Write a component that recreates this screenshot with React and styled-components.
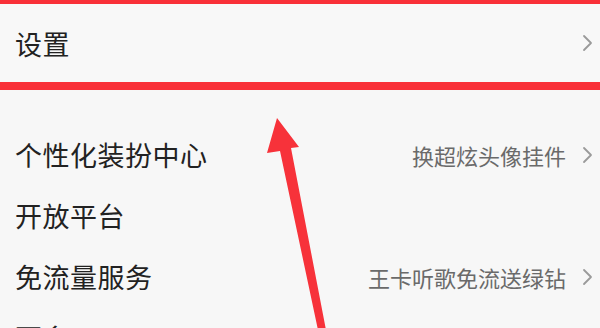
import React from 'react';
import styled, { createGlobalStyle } from 'styled-components';

const GlobalStyle = createGlobalStyle`
  html, body {
    margin: 0;
    padding: 0;
    background: #f7f7f7;
  }
  body {
    font-family: "Noto Sans CJK SC", "Noto Sans", sans-serif;
  }
`;

const Page = styled.div`
  position: relative;
  width: 600px;
  height: 328px;
  overflow: hidden;
  background: #f7f7f7;
`;

const Highlight = styled.div`
  border-top: 4px solid #f93038;
  border-bottom: 8px solid #f93038;
  background: #f8f8f8;
`;

const Row = styled.div`
  display: flex;
  align-items: center;
  justify-content: space-between;
  height: ${({ h }) => h || 61}px;
  padding: 0 6px 0 15px;
  box-sizing: border-box;
`;

const Label = styled.span`
  font-size: 27px;
  line-height: 1;
  color: #222;
  letter-spacing: 0.5px;
`;

const Side = styled.div`
  display: flex;
  align-items: center;
  gap: 16px;
`;

const Hint = styled.span`
  font-size: 22px;
  line-height: 1;
  color: #6a6a6a;
`;

const List = styled.div`
  padding-top: 34px;
`;

const ArrowLayer = styled.svg`
  position: absolute;
  left: 0;
  top: 0;
  pointer-events: none;
`;

const Chevron = () => (
  <svg width="12" height="18" viewBox="0 0 12 18">
    <path d="M2 2 L9 9 L2 16" fill="none" stroke="#9a9a9a" strokeWidth="1.8" strokeLinecap="round" strokeLinejoin="round" />
  </svg>
);

const items = [
  { label: '个性化装扮中心', hint: '换超炫头像挂件' },
  { label: '开放平台' },
  { label: '免流量服务', hint: '王卡听歌免流送绿钻' },
  { label: '更多' },
];

const App = () => (
  <Page>
    <GlobalStyle />
    <Highlight>
      <Row h={78}>
        <Label>设置</Label>
        <Chevron />
      </Row>
    </Highlight>
    <List>
      {items.map(item => (
        <Row key={item.label}>
          <Label>{item.label}</Label>
          {item.hint && (
            <Side>
              <Hint>{item.hint}</Hint>
              <Chevron />
            </Side>
          )}
        </Row>
      ))}
    </List>
    <ArrowLayer width="600" height="328" viewBox="0 0 600 328">
      <path d="M277 118 L299 147 L291 148 L326 330 L318 330 L280 151 L267 153 Z" fill="#f7323a" />
    </ArrowLayer>
  </Page>
);

export default App;
